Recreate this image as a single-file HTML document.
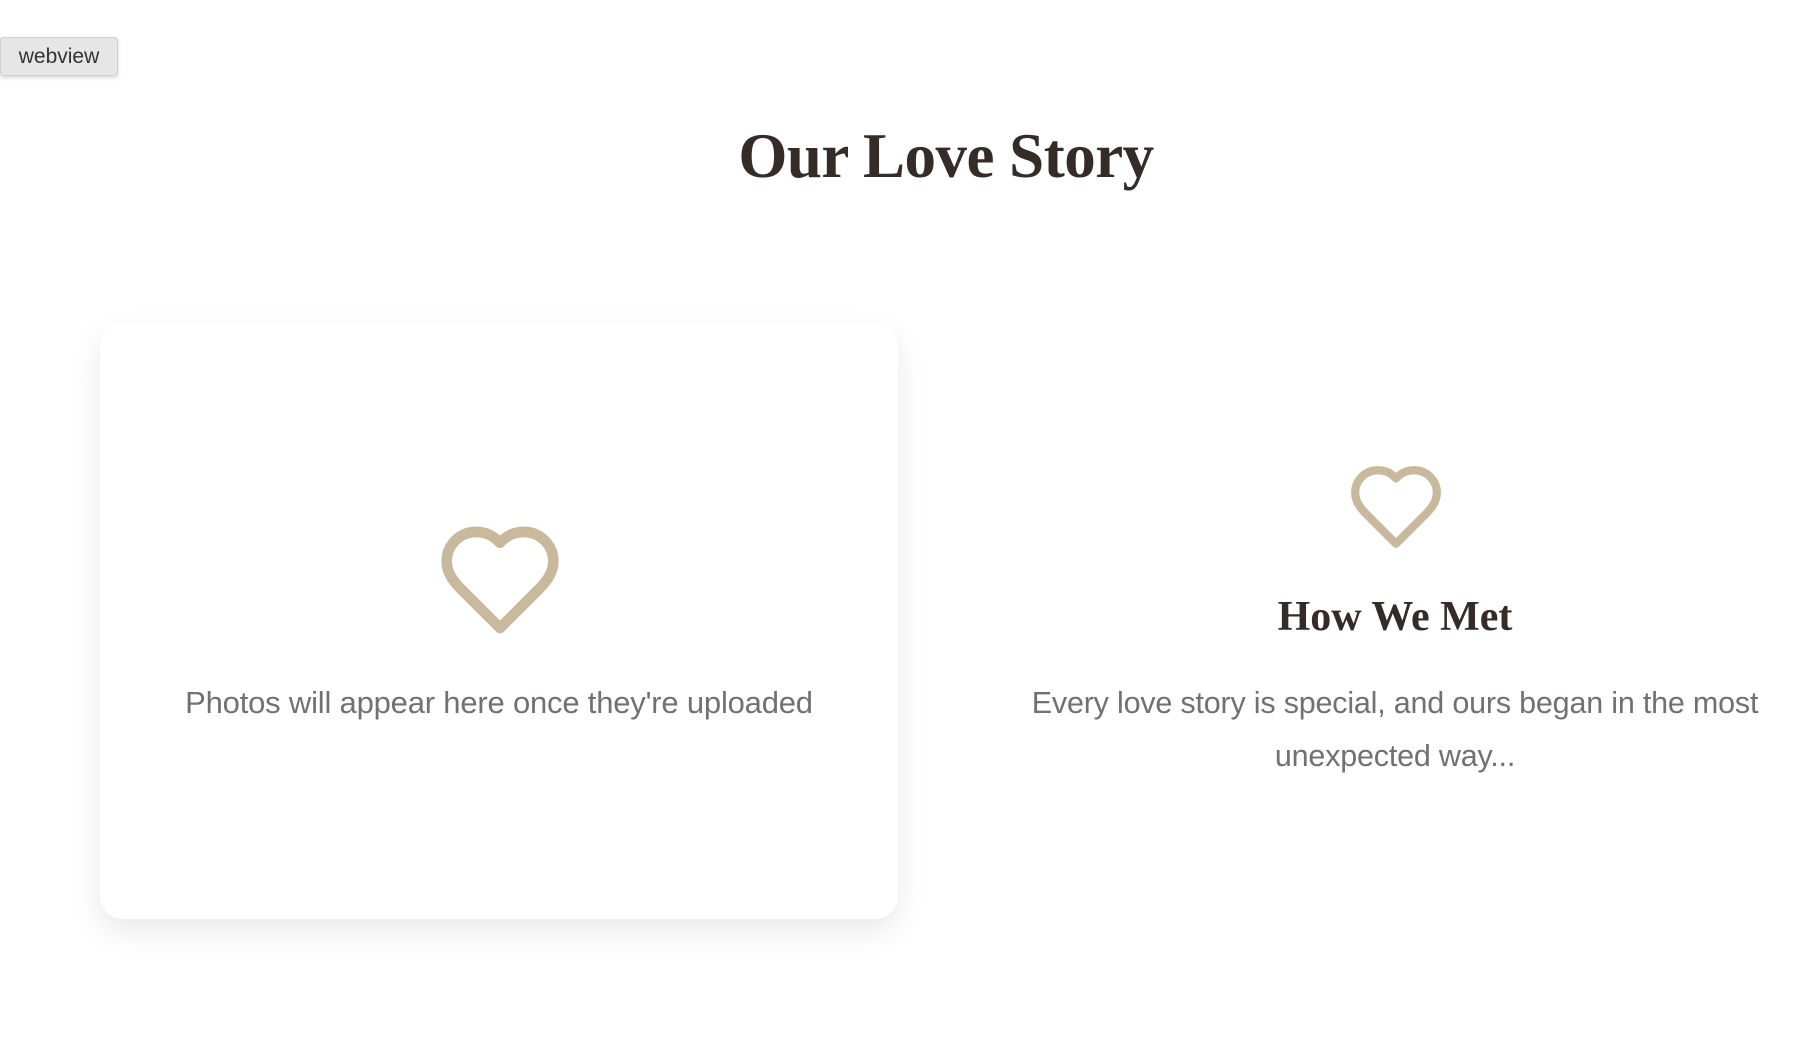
<!DOCTYPE html>
<html><head><meta charset="utf-8"><style>
html,body{margin:0;padding:0;width:1796px;height:1046px;background:#fff;overflow:hidden;position:relative;font-family:"Liberation Sans",sans-serif}
.badge{position:absolute;left:0;top:37px;width:116px;height:37px;background:#e6e6e6;border:1px solid #d0d0d0;border-radius:3px;box-shadow:0 2px 4px rgba(0,0,0,.15);font-size:21px;color:#333;text-align:center;line-height:37px}
h1{position:absolute;left:0;width:1892px;top:120px;margin:0;text-align:center;font-family:"Liberation Serif",serif;font-weight:bold;font-size:63px;color:#352c28;letter-spacing:-0.5px}
.card{position:absolute;left:100px;top:323px;width:798px;height:596px;background:#fff;border-radius:23px;box-shadow:0 12px 30px rgba(0,0,0,.09)}
.cap{position:absolute;left:100px;width:798px;top:685px;text-align:center;font-size:31px;color:#737070;letter-spacing:-0.2px}
.h2{position:absolute;left:1000px;width:790px;top:593px;text-align:center;font-family:"Liberation Serif",serif;font-weight:bold;font-size:42px;color:#352c28}
.p{position:absolute;left:1000px;width:790px;top:677px;text-align:center;font-size:30.5px;line-height:53px;color:#737070;letter-spacing:-0.2px}
svg{position:absolute}
</style></head><body>
<div class="badge">webview</div>
<h1>Our Love Story</h1>
<div class="card"></div>
<svg style="left:436px;top:516px" width="128" height="128" viewBox="0 0 24 24" fill="none" stroke="#c8b89c" stroke-width="2" stroke-linecap="round" stroke-linejoin="round"><path d="M19 14c1.49-1.46 3-3.21 3-5.5A5.5 5.5 0 0 0 16.5 3c-1.76 0-3 .5-4.5 2-1.5-1.5-2.74-2-4.5-2A5.5 5.5 0 0 0 2 8.5c0 2.3 1.5 4.050 3 5.5l7 7Z"/></svg>
<div class="cap">Photos will appear here once they're uploaded</div>
<svg style="left:1347px;top:458px" width="98" height="98" viewBox="0 0 24 24" fill="none" stroke="#c8b89c" stroke-width="2" stroke-linecap="round" stroke-linejoin="round"><path d="M19 14c1.49-1.46 3-3.21 3-5.5A5.5 5.5 0 0 0 16.5 3c-1.76 0-3 .5-4.5 2-1.5-1.5-2.74-2-4.5-2A5.5 5.5 0 0 0 2 8.5c0 2.3 1.5 4.05 3 5.5l7 7Z"/></svg>
<div class="h2">How We Met</div>
<div class="p">Every love story is special, and ours began in the most unexpected way...</div>
</body></html>
